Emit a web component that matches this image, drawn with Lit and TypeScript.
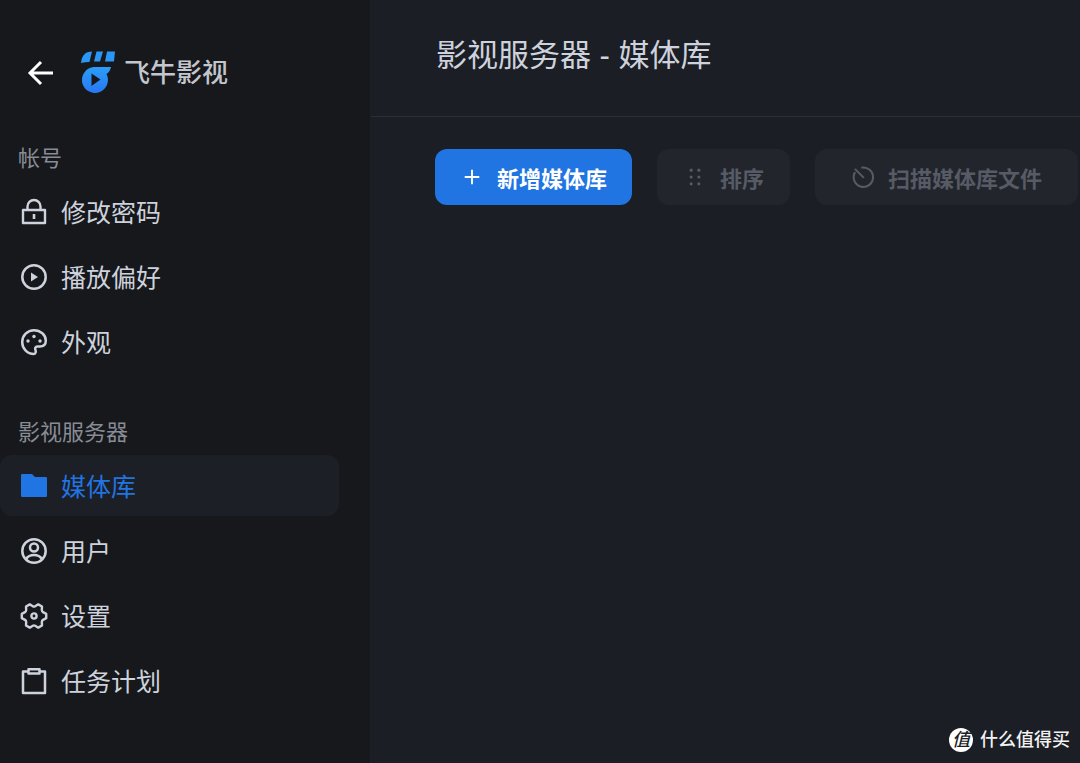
import { LitElement, html, css, svg, nothing, type TemplateResult } from "lit";
import { customElement, property, state } from "lit/decorators.js";
import { classMap } from "lit/directives/class-map.js";

const polar = (radius: number, degrees: number) => {
  const a = (degrees * Math.PI) / 180;
  return `${(14 + radius * Math.cos(a)).toFixed(2)} ${(14 + radius * Math.sin(a)).toFixed(2)}`;
};

// Six-lobed cog: each lobe has a short flat tip and a curved valley after it.
const cog =
  [0, 60, 120, 180, 240, 300]
    .map((a, i) => `${i ? "L" : "M"}${polar(12.4, a - 10)}L${polar(12.4, a + 10)}L${polar(9.8, a + 23)}Q${polar(9, a + 30)} ${polar(9.8, a + 37)}`)
    .join("") + "z";

const glyphs: Record<string, TemplateResult> = {
  back: svg`<path d="M27 14H4M15 3L4 14l11 11" fill="none" stroke="currentColor" stroke-width="3"/>`,
  lock: svg`<path d="M3 12h22v13H3z M7.500 12V8.500a6.500 6.500 0 0 1 13 0V12" fill="none" stroke="currentColor" stroke-width="2.400" stroke-linejoin="round"/><path d="M14 16v5" stroke="currentColor" stroke-width="2.600"/>`,
  play: svg`<circle cx="14" cy="14" r="11.700" fill="none" stroke="currentColor" stroke-width="2.500"/><path d="M11 9.500v9l7-4.500z" fill="currentColor"/>`,
  palette: svg`<path d="M14 26C7 26 2.200 20.500 2.200 14S7.500 2.200 14 2.200 25.800 7 25.800 12.500c0 4-2.600 6-6 6h-2.500c-1.800 0-2.700 1.700-1.900 3.300.7 1.700.4 4.200-1.400 4.200z" fill="none" stroke="currentColor" stroke-width="2.500" stroke-linejoin="round"/><circle cx="8" cy="13" r="1.700" fill="currentColor"/><circle cx="14" cy="8.500" r="1.700" fill="currentColor"/><circle cx="20" cy="13" r="1.700" fill="currentColor"/>`,
  folder: svg`<path d="M1 3.200Q1 2 2.200 2H12l3 3h10.800Q27 5 27 6.200v17.600q0 1.200-1.200 1.200H2.200Q1 25 1 23.800z" fill="currentColor"/>`,
  user: svg`<g fill="none" stroke="currentColor" stroke-width="2.500"><circle cx="14" cy="14" r="11.700"/><circle cx="14" cy="10.500" r="4"/><path d="M6 22c2-3 5-4 8-4s6 1 8 4"/></g>`,
  gear: svg`<g fill="none" stroke="currentColor" stroke-width="2.400" stroke-linejoin="round"><path d=${cog}/><circle cx="14" cy="14" r="2.600"/></g>`,
  clipboard: svg`<g fill="none" stroke="currentColor" stroke-width="2.500" stroke-linejoin="round"><path d="M8 4.500H3V26h22V4.500h-5"/><path d="M8.500 2.200h11v4.300h-11z"/></g>`,
  plus: svg`<path d="M14 5.500v17M5.500 14h17" stroke="currentColor" stroke-width="2.200"/>`,
  grip: svg`${[6, 14, 22].map(
    (y) => svg`<circle cx="9.500" cy=${y} r="1.800" fill="currentColor"/><circle cx="18.500" cy=${y} r="1.800" fill="currentColor"/>`,
  )}`,
  scan: svg`<path d="M12 3.200A11.300 11.300 0 1 1 4.800 8.300M4.500 4.500L15 15" fill="none" stroke="currentColor" stroke-width="2.400"/>`,
};

@customElement("line-icon")
export class LineIcon extends LitElement {
  static styles = css`
    :host {
      display: inline-flex;
      flex: none;
      width: 28px;
      height: 28px;
    }
    .glyph {
      width: 100%;
      height: 100%;
    }
  `;

  @property() name = "";

  render() {
    return html`<svg class="glyph" viewBox="0 0 28 28" aria-hidden="true">${glyphs[this.name] ?? nothing}</svg>`;
  }
}

interface Entry {
  id: string;
  icon: string;
  label: string;
}

const sections: { title: string; entries: Entry[] }[] = [
  {
    title: "帐号",
    entries: [
      { id: "password", icon: "lock", label: "修改密码" },
      { id: "playback", icon: "play", label: "播放偏好" },
      { id: "appearance", icon: "palette", label: "外观" },
    ],
  },
  {
    title: "影视服务器",
    entries: [
      { id: "library", icon: "folder", label: "媒体库" },
      { id: "users", icon: "user", label: "用户" },
      { id: "settings", icon: "gear", label: "设置" },
      { id: "tasks", icon: "clipboard", label: "任务计划" },
    ],
  },
];

@customElement("app-root")
export class AppRoot extends LitElement {
  static styles = css`
    :host {
      display: flex;
      min-height: 100vh;
      overflow: hidden;
      position: relative;
      background: #1b1e25;
      color: #cdd2dc;
      font-family: "Liberation Sans", "Noto Sans CJK SC", sans-serif;
    }
    * {
      box-sizing: border-box;
    }
    .sidebar {
      flex: none;
      width: 370px;
      background: #16181c;
    }
    .brand {
      display: flex;
      align-items: center;
      gap: 26px;
      padding: 45px 26px 42px;
      height: 143px;
    }
    .back {
      display: flex;
      padding: 0;
      border: 0;
      background: none;
      color: #fff;
      cursor: pointer;
    }
    .logo {
      display: flex;
      align-items: center;
      gap: 8px;
    }
    .mark {
      width: 36px;
      height: 44px;
    }
    .name {
      font-size: 26px;
      line-height: 36px;
      font-weight: 500;
      color: #c3c6cd;
    }
    .section + .section {
      margin-top: 45px;
    }
    .caption {
      margin: 0 0 6px;
      padding-left: 18px;
      font-size: 22px;
      line-height: 32px;
      font-weight: 400;
      color: #888c95;
    }
    .list {
      display: grid;
      gap: 4px;
      margin: 0;
      padding: 0 31px 0 0;
      list-style: none;
    }
    .item {
      display: flex;
      align-items: center;
      gap: 13px;
      height: 61px;
      padding: 0 20px;
      border-radius: 12px;
      font-size: 25px;
      line-height: 36px;
      color: inherit;
      text-decoration: none;
    }
    .label {
      padding-top: 3px;
    }
    .item.active {
      background: #1c1f25;
      color: #2175e2;
    }
    .main {
      flex: 1;
      min-width: 0;
      border-left: 1px solid #1d2026;
    }
    .header {
      display: flex;
      align-items: center;
      padding: 33px 65px 37px;
      border-bottom: 1px solid #2c2f34;
    }
    .title {
      margin: 0;
      font-size: 31px;
      line-height: 46px;
      font-weight: 400;
      white-space: nowrap;
    }
    .toolbar {
      display: flex;
      gap: 25px;
      padding: 32px 64px;
    }
    .button {
      display: flex;
      flex: none;
      align-items: center;
      gap: 13px;
      height: 56px;
      padding: 0 26px;
      border: 0;
      border-radius: 12px;
      background: #22252c;
      color: #565b65;
      font: bold 22px/32px "Noto Sans CJK SC", sans-serif;
      white-space: nowrap;
    }
    .button.primary {
      padding: 0 25px;
      background: #2175e2;
      color: #fff;
      cursor: pointer;
    }
    .button.wide {
      padding: 0 36px;
    }
    .small {
      width: 24px;
      height: 24px;
    }
    .watermark {
      position: absolute;
      right: 10px;
      bottom: 10px;
      display: flex;
      align-items: center;
      gap: 7px;
      font-size: 18px;
      line-height: 26px;
      font-weight: 500;
      color: #f2f2f3;
    }
    .seal {
      display: grid;
      place-items: center;
      width: 24px;
      height: 24px;
      border-radius: 50%;
      background: #fff;
      color: #1b1e25;
      line-height: 24px;
      font-style: italic;
    }
  `;

  @state() private current = "library";

  private entry(e: Entry) {
    const active = e.id === this.current;
    return html`<li>
      <a
        class=${classMap({ item: true, active })}
        href="#${e.id}"
        aria-current=${active ? "page" : nothing}
        @click=${() => (this.current = e.id)}
        ><line-icon name=${e.icon}></line-icon><span class="label">${e.label}</span></a
      >
    </li>`;
  }

  render() {
    return html`
      <aside class="sidebar">
        <div class="brand">
          <button class="back" aria-label="返回"><line-icon name="back"></line-icon></button>
          <div class="logo">
            <svg class="mark" viewBox="0 0 36 44" aria-hidden="true">
              <defs>
                <linearGradient id="tint" x1="0" y1="0" x2="0" y2="1">
                  <stop offset="0" stop-color="#2b9df6" />
                  <stop offset="1" stop-color="#2778f7" />
                </linearGradient>
              </defs>
              <path d="M1 12Q2 .5 12 .5L9.500 11Q5 11 1 12zM16.500 .5H23l-3 10h-6zM27 .5h8l-1 10h-9z" fill="#2b96f6" />
              <path
                fill="url(#tint)"
                fill-rule="evenodd"
                d="M14 16H31Q30 21 26.500 23A13 13 0 1 1 14 16zM11.500 22.500V35L20.500 28.500z"
              />
            </svg>
            <span class="name">飞牛影视</span>
          </div>
        </div>
        <nav>
          ${sections.map(
            (s) => html`<section class="section">
              <h2 class="caption">${s.title}</h2>
              <ul class="list">
                ${s.entries.map((e) => this.entry(e))}
              </ul>
            </section>`,
          )}
        </nav>
      </aside>
      <main class="main">
        <header class="header"><h1 class="title">影视服务器 - 媒体库</h1></header>
        <div class="toolbar">
          <button class="button primary"><line-icon class="small" name="plus"></line-icon>新增媒体库</button>
          <button class="button" disabled><line-icon class="small" name="grip"></line-icon>排序</button>
          <button class="button wide" disabled><line-icon class="small" name="scan"></line-icon>扫描媒体库文件</button>
        </div>
      </main>
      <div class="watermark"><span class="seal">值</span><span>什么值得买</span></div>
    `;
  }
}
